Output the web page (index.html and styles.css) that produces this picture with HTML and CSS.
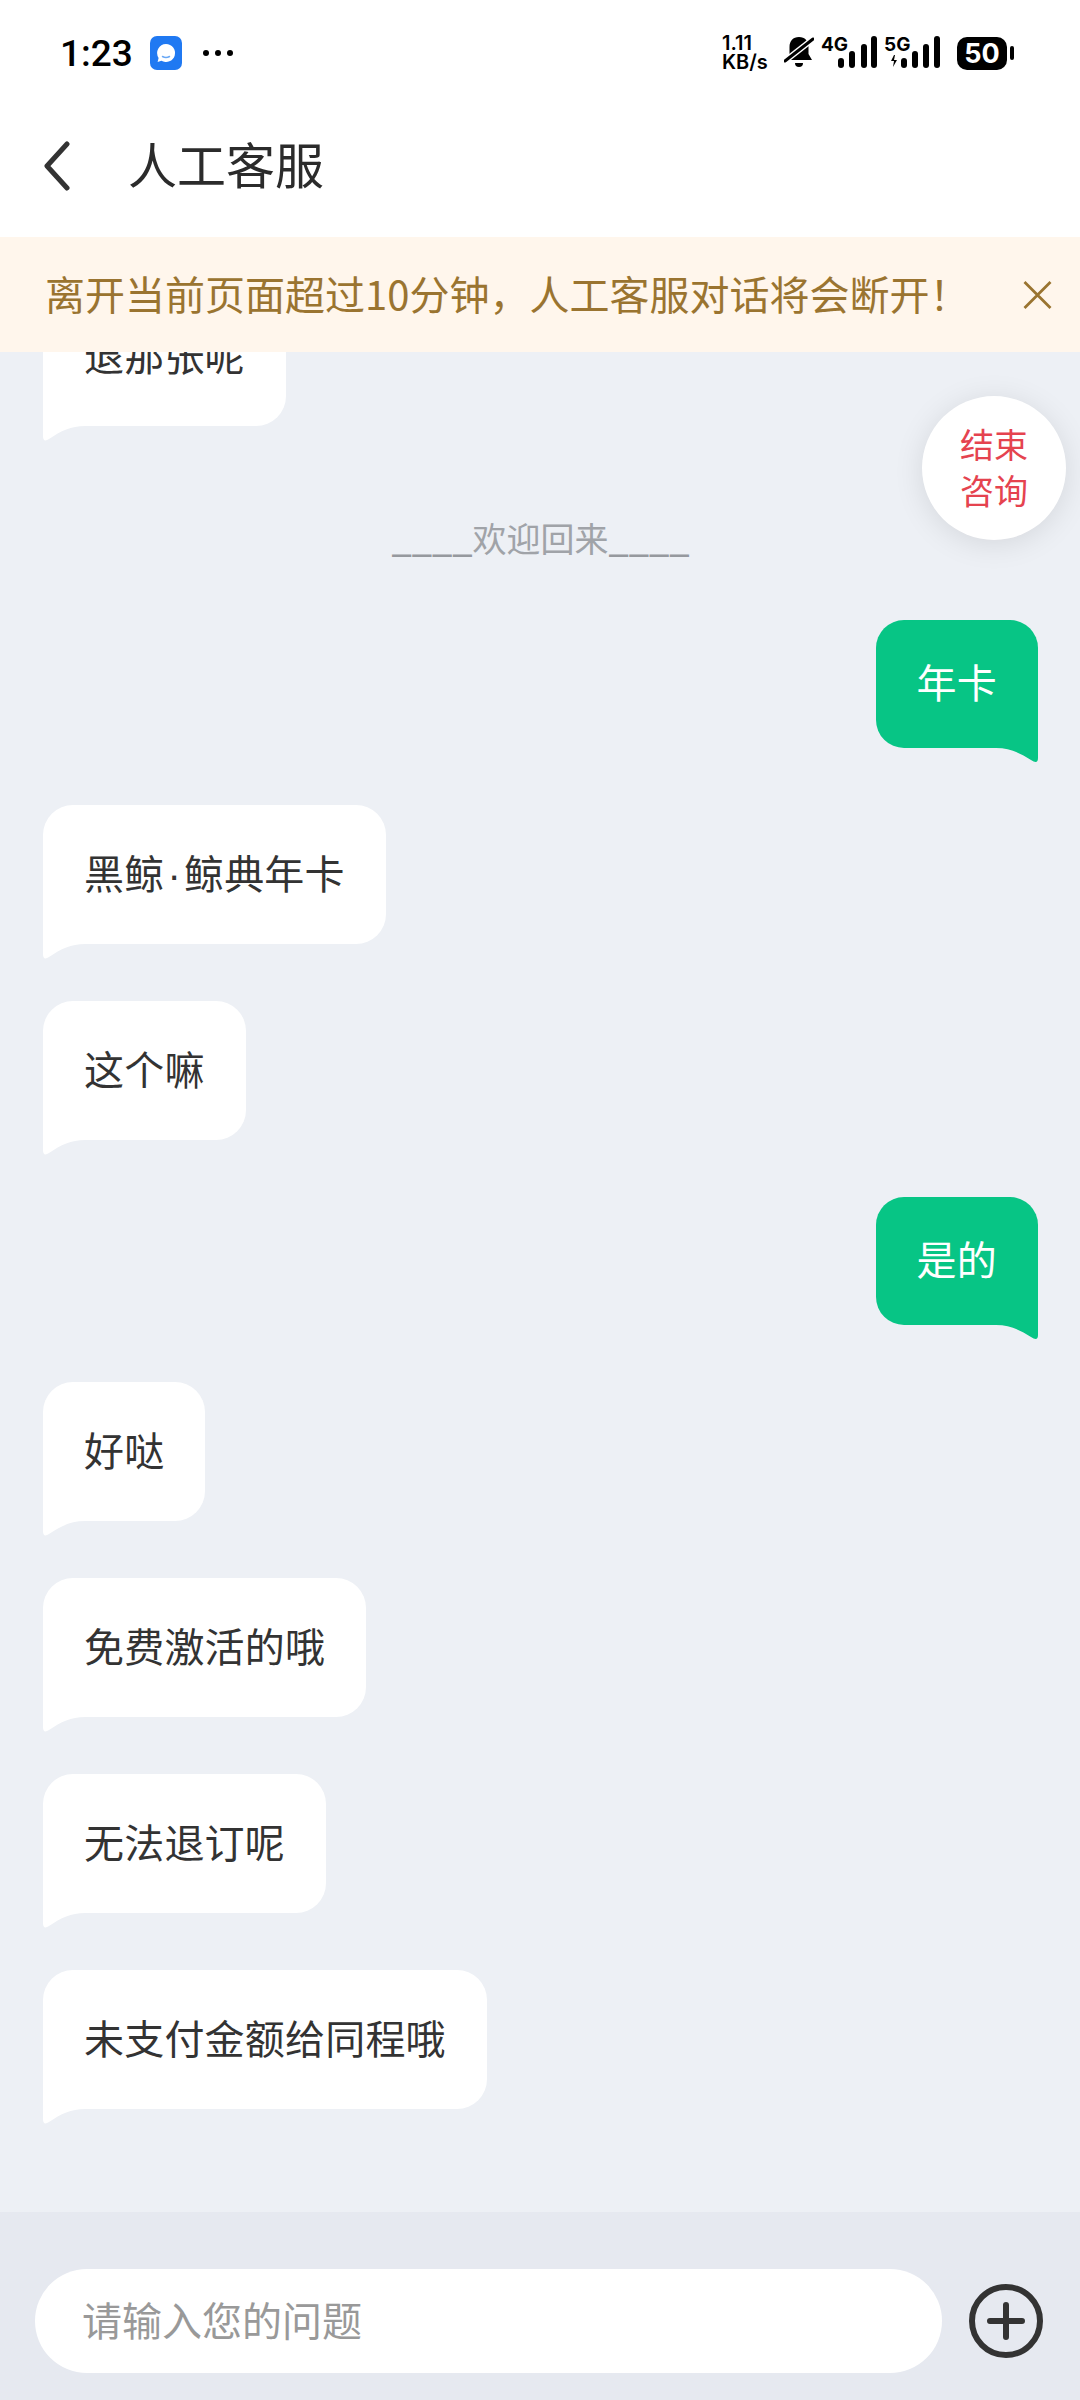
FILE: index.html
```html
<!DOCTYPE html>
<html lang="zh-CN">
<head>
    <meta charset="UTF-8">
    <meta name="viewport" content="width=device-width, initial-scale=1.0">
    <title>人工客服</title>
    <link rel="stylesheet" href="styles.css">
</head>
<body>
    <div class="app">
        <div class="status-bar">
            <div class="status-left">
                <span class="clock">1:23</span>
                <svg class="app-icon" width="32" height="34" viewBox="0 0 32 34">
                    <rect width="32" height="34" rx="7" fill="#2079f2"/>
                    <path d="M16 8a9 9 0 1 1-4.600 16.700L7.600 26l1-4.100A9 9 0 0 1 16 8z" fill="#fff"/>
                    <path d="M12.500 20.500q3.500 2 7 0" fill="none" stroke="#6aa8f5" stroke-width="1.500" stroke-linecap="round"/>
                </svg>
                <svg class="more-dots" width="30" height="6" viewBox="0 0 30 6">
                    <circle cx="3" cy="3" r="3"/>
                    <circle cx="15" cy="3" r="3"/>
                    <circle cx="27" cy="3" r="3"/>
                </svg>
            </div>
            <div class="status-right">
                <div class="net-speed">1.11<br>KB/s</div>
                <svg class="bell" width="30" height="34" viewBox="0 0 30 34">
                    <path d="M15 1c-6 0-9.500 4-9.500 10v7L2 24h26l-3.500-6v-7C24.500 5 21 1 15 1z"/>
                    <path d="M11 27h8a4 4 0 0 1-8 0z"/>
                    <path d="M1 25L29 3" stroke="#fff" stroke-width="6"/>
                    <path d="M1 25L29 3" stroke="#000" stroke-width="3" stroke-linecap="round"/>
                </svg>
                <svg class="signal" width="57" height="46" viewBox="0 -6 57 46">
                    <text x="0" y="15" class="signal-label">4G</text>
                    <rect x="17" y="22" width="6" height="10" rx="3"/>
                    <rect x="28" y="15" width="6" height="17" rx="3"/>
                    <rect x="40" y="8" width="6" height="24" rx="3"/>
                    <rect x="50" y="0" width="6" height="32" rx="3"/>
                </svg>
                <svg class="signal" width="57" height="46" viewBox="0 -6 57 46">
                    <text x="0" y="15" class="signal-label">5G</text>
                    <path d="M10 19l-3 6h3l-1 6 4-7h-3l1-5z"/>
                    <rect x="17" y="22" width="6" height="10" rx="3"/>
                    <rect x="28" y="15" width="6" height="17" rx="3"/>
                    <rect x="39" y="8" width="6" height="24" rx="3"/>
                    <rect x="50" y="0" width="6" height="32" rx="3"/>
                </svg>
                <div class="battery">
                    <span class="battery-level">50</span>
                    <span class="battery-nub"></span>
                </div>
            </div>
        </div>

        <div class="title-bar">
            <svg class="back-icon" width="28" height="50" viewBox="0 0 28 50">
                <path d="M24 3L4 25l20 22" fill="none" stroke="#333" stroke-width="5" stroke-linecap="round" stroke-linejoin="round"/>
            </svg>
            <h1>人工客服</h1>
        </div>

        <div class="notice">
            <span>离开当前页面超过10分钟，人工客服对话将会断开！</span>
            <svg class="notice-close" width="29" height="28" viewBox="0 0 29 28">
                <path d="M1.500 1L27.500 27M27.500 1L1.500 27" fill="none" stroke="#9a7430" stroke-width="2.800"/>
            </svg>
        </div>

        <div class="chat">
            <div class="messages">
                <div class="bubble from-agent">退那张呢</div>
                <div class="welcome"><span class="rule">____</span>欢迎回来<span class="rule">____</span></div>
                <div class="bubble from-user">年卡</div>
                <div class="bubble from-agent">黑鲸<span class="dot">·</span>鲸典年卡</div>
                <div class="bubble from-agent">这个嘛</div>
                <div class="bubble from-user">是的</div>
                <div class="bubble from-agent">好哒</div>
                <div class="bubble from-agent">免费激活的哦</div>
                <div class="bubble from-agent">无法退订呢</div>
                <div class="bubble from-agent">未支付金额给同程哦</div>
            </div>
            <div class="end-chat">结束<br>咨询</div>
        </div>

        <div class="input-bar">
            <input class="question" type="text" placeholder="请输入您的问题">
            <svg class="add-icon" width="74" height="74" viewBox="0 0 74 74">
                <circle cx="37" cy="37" r="34" fill="none" stroke="#333" stroke-width="6"/>
                <path d="M37 21v32M21 37h32" fill="none" stroke="#333" stroke-width="6" stroke-linecap="round"/>
            </svg>
        </div>
    </div>
</body>
</html>
```

FILE: styles.css
```css
:root {
    --chat-bg: #edf0f5;
    --footer-bg: #e6e9f0;
    --notice-bg: #fff6ec;
    --notice-text: #9a7430;
    --green: #07c585;
    --text-dark: #333333;
    --red: #e5434f;
}

* {
    box-sizing: border-box;
}

body {
    margin: 0;
    background: #ffffff;
    font-family: "Noto Sans CJK SC", "Noto Sans", sans-serif;
    color: var(--text-dark);
}

.app {
    width: 1080px;
    height: 2400px;
    display: flex;
    flex-direction: column;
    overflow: hidden;
}

/* status bar */
.status-bar {
    height: 106px;
    flex-shrink: 0;
    display: flex;
    justify-content: space-between;
    align-items: center;
    padding: 0 66px 0 60px;
    color: #000000;
}

.status-left {
    display: flex;
    align-items: center;
}

.clock {
    font-family: Roboto, sans-serif;
    font-size: 37px;
    font-weight: 500;
    width: 90px;
}

.more-dots {
    margin-left: 21px;
}

.status-right {
    display: flex;
    align-items: center;
}

.net-speed {
    font-family: Inter, sans-serif;
    font-size: 20px;
    font-weight: 600;
    line-height: 19px;
    width: 62px;
}

.signal {
    margin-left: 7px;
}

.signal + .signal {
    margin-left: 6px;
}

.signal-label {
    font-family: Inter, sans-serif;
    font-size: 19px;
    font-weight: 700;
}

.battery {
    display: flex;
    align-items: center;
    margin-left: 16px;
}

.battery-level {
    width: 50px;
    height: 33px;
    border-radius: 10px;
    background: #000000;
    color: #ffffff;
    font-family: Inter, sans-serif;
    font-size: 27px;
    font-weight: 700;
    line-height: 33px;
    text-align: center;
}

.battery-nub {
    width: 4px;
    height: 14px;
    margin-left: 3px;
    border-radius: 2px;
    background: #000000;
}

/* title */
.title-bar {
    height: 131px;
    flex-shrink: 0;
    display: flex;
    align-items: center;
    padding: 0 0 12px 43px;
}

h1 {
    margin: 0 0 6px 57px;
    font-size: 49px;
    font-weight: 400;
    line-height: 60px;
    color: #2b2b2b;
}

.notice {
    height: 115px;
    flex-shrink: 0;
    display: flex;
    justify-content: space-between;
    align-items: center;
    padding: 0 28px 0 45px;
    background: var(--notice-bg);
    color: var(--notice-text);
    font-size: 40px;
    position: relative;
    z-index: 1;
}

.notice span {
    padding-bottom: 4px;
}

/* chat, kept scrolled to the latest message */
.chat {
    flex: 1;
    min-height: 0;
    position: relative;
    background: var(--chat-bg);
    overflow: hidden;
    display: flex;
    flex-direction: column;
    justify-content: flex-end;
}

.messages {
    display: flex;
    flex-direction: column;
    gap: 57px;
    padding: 0 42px 103px 43px;
}

.bubble {
    position: relative;
    font-size: 40px;
    line-height: 57px;
    letter-spacing: 0.2px;
}

.from-agent {
    align-self: flex-start;
    padding: 39px 41px 43px;
    background: #ffffff;
    border-radius: 30px 30px 30px 0;
}

.from-agent::after {
    content: "";
    position: absolute;
    left: 0;
    top: 100%;
    width: 42px;
    height: 16px;
    background: #ffffff;
    clip-path: path("M0 0H42C28 0 18 5 6 13Q0 17 0 10Z");
}

.from-user {
    align-self: flex-end;
    padding: 33px 41px 38px;
    background: var(--green);
    color: #ffffff;
    border-radius: 28px 28px 0 28px;
}

.from-user::after {
    content: "";
    position: absolute;
    right: 0;
    top: 100%;
    width: 42px;
    height: 15px;
    background: var(--green);
    clip-path: path("M42 0H0C14 0 24 5 35 12Q42 17 42 10Z");
}

.dot {
    margin: 0 3px;
    font-family: "Liberation Sans", sans-serif;
    line-height: 0;
}

.welcome {
    margin-top: 30px;
    text-align: center;
    font-size: 34px;
    line-height: 50px;
    color: #a0a3a8;
}

.rule {
    font-size: 36px;
    font-weight: 500;
    color: #96999e;
    line-height: 0;
}

.end-chat {
    position: absolute;
    top: 44px;
    right: 14px;
    width: 144px;
    height: 144px;
    padding-bottom: 3px;
    display: flex;
    align-items: center;
    justify-content: center;
    text-align: center;
    border-radius: 50%;
    background: #ffffff;
    box-shadow: 0 4px 30px rgba(0, 0, 0, 0.1);
    color: var(--red);
    font-size: 34px;
    line-height: 46px;
}

/* footer */
.input-bar {
    height: 188px;
    flex-shrink: 0;
    display: flex;
    align-items: flex-start;
    padding: 57px 37px 0 35px;
    background: var(--footer-bg);
}

.question {
    flex: 1;
    height: 104px;
    padding: 0 47px 4px;
    border: none;
    border-radius: 52px;
    background: #ffffff;
    font-family: inherit;
    font-size: 40px;
    outline: none;
}

.question::placeholder {
    color: #999999;
}

.add-icon {
    margin: 15px 0 0 27px;
}
```
